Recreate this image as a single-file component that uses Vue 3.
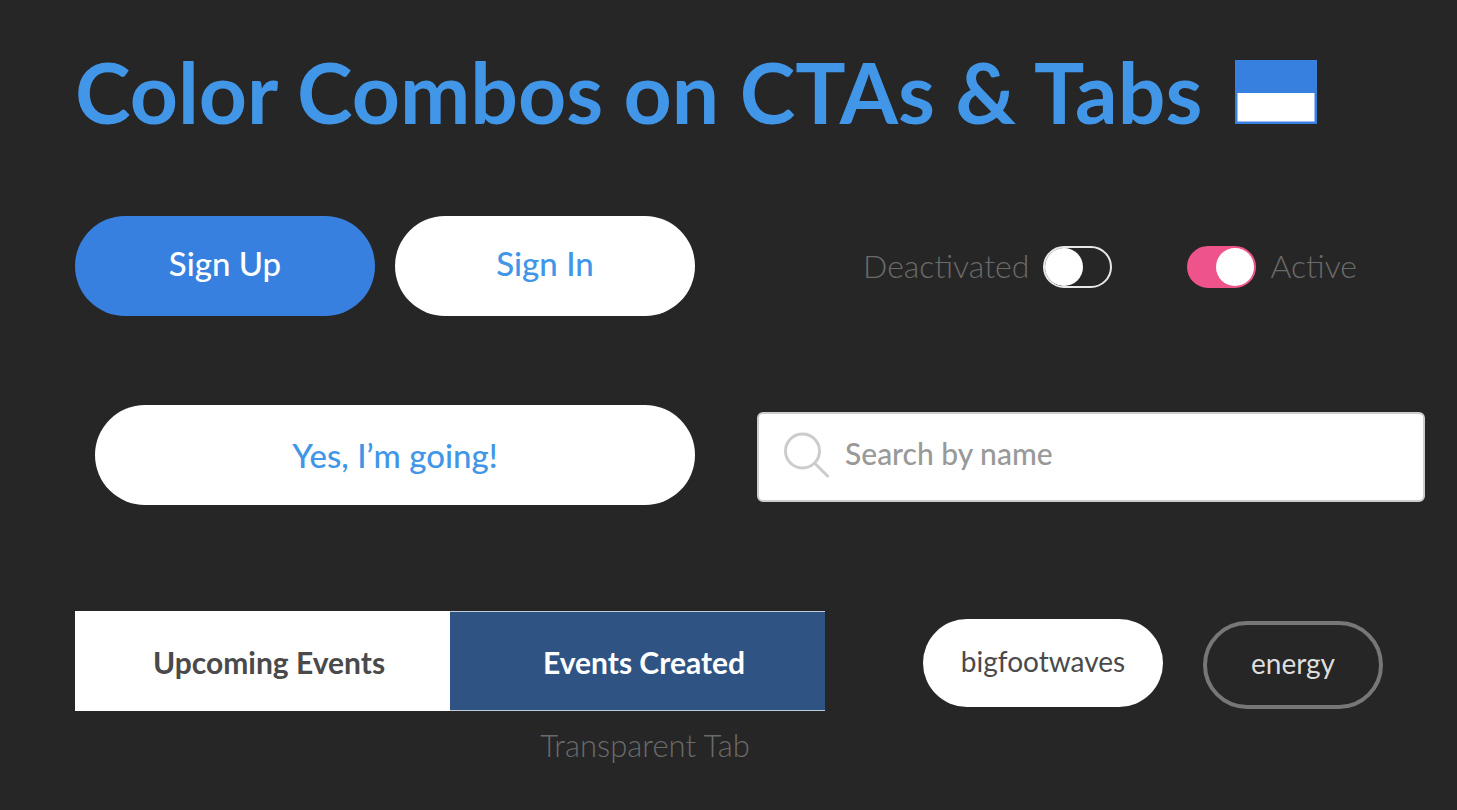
<script setup>
import { ref } from 'vue'

const query = ref('')
const muted = ref(false)
const active = ref(true)
const tab = ref('upcoming')
</script>

<template>
  <main class="board">
    <header class="heading">
      <h1>Color Combos on CTAs &amp; Tabs</h1>
      <svg class="swatch" viewBox="0 0 82 64" aria-hidden="true">
        <rect width="82" height="64" fill="#3880df" />
        <rect x="2.5" y="33" width="77" height="28.5" fill="#fff" />
      </svg>
    </header>

    <section class="row row-actions">
      <div class="pair">
        <button class="pill primary" type="button">Sign Up</button>
        <button class="pill light" type="button">Sign In</button>
      </div>
      <div class="switches">
        <label class="switch">
          <span>Deactivated</span>
          <input v-model="muted" type="checkbox" />
        </label>
        <label class="switch">
          <input v-model="active" type="checkbox" />
          <span>Active</span>
        </label>
      </div>
    </section>

    <section class="row row-search">
      <button class="pill light wide" type="button">Yes, I’m going!</button>
      <label class="search">
        <svg viewBox="0 0 48 48" aria-hidden="true">
          <circle cx="19.5" cy="19" r="17" />
          <path d="M31.5 31 L45.5 45" />
        </svg>
        <input v-model="query" type="text" placeholder="Search by name" aria-label="Search by name" />
      </label>
    </section>

    <section class="row row-tabs">
      <div class="tab-group">
        <div class="tabs" role="tablist">
          <button class="tab" type="button" role="tab" :aria-selected="tab === 'upcoming'" @click="tab = 'upcoming'">Upcoming Events</button>
          <button class="tab" type="button" role="tab" :aria-selected="tab === 'created'" @click="tab = 'created'">Events Created</button>
        </div>
        <p class="caption">Transparent Tab</p>
      </div>
      <div class="tags">
        <button class="tag solid" type="button">bigfootwaves</button>
        <button class="tag outline" type="button">energy</button>
      </div>
    </section>
  </main>
</template>

<style>
body {
  background: #262626;
}
</style>

<style scoped>
.board {
  box-sizing: border-box;
  min-height: 100vh;
  padding: 40px 32px 40px 75px;
  background: #262626;
  font-family: Lato, "Open Sans", sans-serif;
}

button,
input {
  font-family: inherit;
  margin: 0;
}

button {
  padding: 0;
  border: 0;
  cursor: pointer;
}

.heading {
  display: flex;
  align-items: center;
  gap: 33px;
  height: 104px;
}

h1 {
  margin: 0;
  color: #4296e8;
  font-size: 84px;
  font-weight: 700;
  line-height: 104px;
  white-space: nowrap;
}

.swatch {
  flex: none;
  width: 82px;
  height: 64px;
}

.row {
  display: flex;
  justify-content: space-between;
}

.row-actions {
  align-items: center;
  margin-top: 72px;
  padding-right: 68px;
}

.pair {
  display: flex;
  gap: 20px;
}

.pill {
  width: 300px;
  height: 100px;
  padding-bottom: 6px;
  border-radius: 50px;
  font-size: 33px;
  font-weight: 500;
}

.primary {
  background: #3880df;
  color: #fff;
}

.light {
  background: #fff;
  color: #4296e8;
}

.wide {
  flex: none;
  width: 600px;
  padding: 0;
}

.switches {
  display: flex;
  gap: 75px;
  padding-top: 2px;
}

.switch {
  display: flex;
  align-items: center;
  gap: 14px;
  color: #6a6a6a;
  font-size: 32px;
  font-weight: 300;
}

.switch span {
  padding-bottom: 4px;
}

.switch input {
  appearance: none;
  box-sizing: border-box;
  display: flex;
  width: 69px;
  height: 42px;
  border: 2px solid #e8e8e8;
  border-radius: 21px;
}

.switch input::before {
  content: "";
  width: 38px;
  height: 38px;
  border-radius: 50%;
  background: #fff;
}

.switch input:checked {
  justify-content: flex-end;
  border-color: #ee538b;
  background: #ee538b;
}

.row-search {
  align-items: center;
  gap: 62px;
  margin-top: 89px;
  padding-left: 20px;
}

.search {
  box-sizing: border-box;
  display: flex;
  flex: 1;
  align-items: center;
  gap: 14px;
  height: 90px;
  margin-top: 4px;
  padding: 0 24px 2px;
  border: 2px solid #ccc;
  border-radius: 6px;
  background: #fff;
}

.search svg {
  flex: none;
  width: 48px;
  height: 48px;
  fill: none;
  stroke: #ccc;
  stroke-width: 3;
}

.search input {
  flex: 1;
  min-width: 0;
  padding: 0 0 6px;
  border: 0;
  outline: 0;
  background: transparent;
  color: #555;
  font-size: 30px;
  font-weight: 500;
}

.search input::placeholder {
  color: #999;
  opacity: 1;
}

.row-tabs {
  align-items: flex-start;
  margin-top: 106px;
  padding-right: 42px;
}

.tab-group {
  width: 750px;
}

.tabs {
  display: grid;
  grid-template-columns: 1fr 1fr;
}

.tab {
  height: 100px;
  padding: 1px 0 0 13px;
  border-top: 1px solid #c0ccda;
  border-bottom: 1px solid #c0ccda;
  background: #2f5484;
  color: #fff;
  font-size: 30px;
  font-weight: 700;
}

.tab[aria-selected="true"] {
  border-color: #fff;
  background: #fff;
  color: #4a4a4a;
}

.caption {
  margin: 16px 0 0;
  padding-left: 390px;
  text-align: center;
  color: #6a6a6a;
  font-size: 31px;
  font-weight: 300;
  line-height: 36px;
}

.tags {
  display: flex;
  gap: 40px;
  padding-top: 8px;
}

.tag {
  box-sizing: border-box;
  height: 88px;
  padding-bottom: 5px;
  border-radius: 44px;
  font-size: 28px;
}

.solid {
  width: 240px;
  background: #fff;
  color: #4a4a4a;
}

.outline {
  width: 180px;
  margin-top: 2px;
  border: 4px solid #777;
  background: transparent;
  color: #ddd;
}
</style>
